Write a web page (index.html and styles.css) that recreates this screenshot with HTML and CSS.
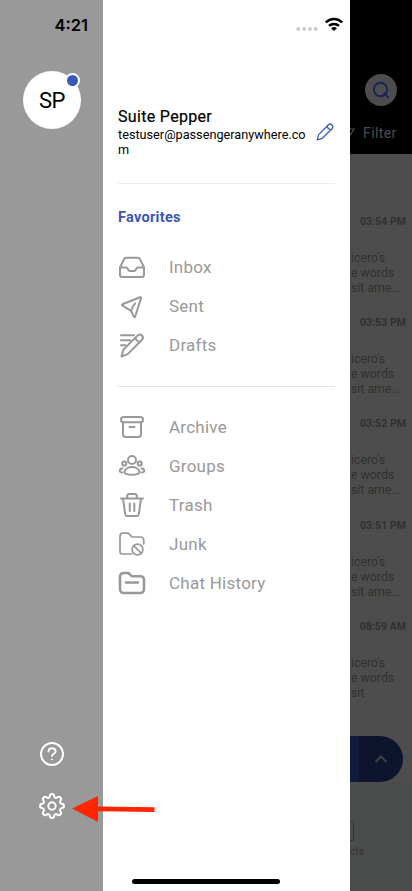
FILE: index.html
```html
<!DOCTYPE html>
<html lang="en">
<head>
<meta charset="utf-8">
<title>Menu</title>
<link rel="stylesheet" href="styles.css">
</head>
<body>
<div class="screen">
  <aside class="rail">
    <div class="clock">4:21</div>
    <div class="avatar">SP<span class="presence"></span></div>
    <div class="rail-tools">
      <svg width="26" height="26" viewBox="0 0 26 26" fill="none" stroke="#fff" stroke-width="1.9" stroke-linecap="round"><circle cx="13" cy="13" r="11"/><path d="M9.5 10.5C9.5 8.4 11 7.3 13 7.3s3.6 1.3 3.6 3.1c0 2.2-3.6 2.5-3.6 4.6"/><circle cx="13" cy="18.4" r=".5" fill="#fff" stroke-width="1"/></svg>
      <svg width="28" height="28" viewBox="0 0 28 28" fill="none" stroke="#fff" stroke-width="2" stroke-linejoin="round"><path d="M11.8 4.1C12.2 1.2 15.8 1.2 16.2 4.1C16.4 5.8 17.9 6.4 19.3 5.4C21.6 3.6 24.2 6.2 22.5 8.6C21.5 10.1 22.1 11.5 23.8 11.8C26.7 12.2 26.7 15.8 23.8 16.2C22.1 16.5 21.5 17.9 22.5 19.4C24.2 21.8 21.6 24.4 19.3 22.6C17.9 21.6 16.4 22.2 16.2 23.9C15.8 26.8 12.2 26.8 11.8 23.9C11.6 22.2 10.1 21.6 8.7 22.6C6.4 24.4 3.8 21.8 5.5 19.4C6.5 17.9 5.9 16.5 4.2 16.2C1.3 15.8 1.3 12.2 4.2 11.8C5.9 11.5 6.5 10.1 5.5 8.6C3.8 6.2 6.4 3.6 8.7 5.4C10.1 6.4 11.6 5.8 11.8 4.1Z"/><circle cx="14" cy="14" r="3.7"/></svg>
    </div>
  </aside>

  <main class="drawer">
    <div class="status">
      <svg width="22" height="6" viewBox="0 0 22 6" fill="#ccc"><circle cx="2.3" cy="3" r="2"/><circle cx="8.1" cy="3" r="2"/><circle cx="13.9" cy="3" r="2"/><circle cx="19.7" cy="3" r="2"/></svg>
      <svg class="wifi" width="20" height="15" viewBox="0 0 20 15" fill="none" stroke="#000" stroke-width="2.5"><path d="M1.8 5.5C6.3 .9 13.7 .9 18.2 5.5"/><path d="M5 8.9c2.8-2.7 7.2-2.7 10 0"/><path d="M7 11.2c1.7-1.6 4.3-1.6 6 0l-3 2.9z" fill="#000" stroke="none"/></svg>
    </div>
    <header class="profile">
      <div class="who">
        <div class="name">Suite Pepper</div>
        <div class="email">testuser@passengeranywhere.com</div>
      </div>
      <svg class="edit" width="18" height="18" viewBox="0 0 18 18" fill="none" stroke="#3b5bc0" stroke-width="1.3" stroke-linejoin="round"><path d="M1.2 16.8l1.4-5.2L12.2 2c2.6-2.500 6.200 1.100 3.800 3.700l-9.700 9.600z"/><path d="M11 3.200c.5 1.900 1.800 3.200 3.800 3.700"/></svg>
    </header>
    <h2 class="heading">Favorites</h2>
    <nav class="menu favorites">
      <a class="item"><svg class="icon" viewBox="0 0 28 28"><path d="M2 14.5L6 6.2Q6.7 4.7 8.3 4.7h11.4q1.6 0 2.3 1.5l4 8.3v7.2q0 2.4-2.4 2.4H4.4Q2 24.1 2 21.7z"/><path d="M2 14.5h6.3q1 0 1.4 1l.4 1.2q.5 1.3 1.900 1.3h4q1.400 0 1.900-1.3l.4-1.2q.4-1 1.400-1H26"/></svg>Inbox</a>
      <a class="item"><svg class="icon" viewBox="0 0 28 28"><path d="M4.500 12.300L22 5.300q1.300-.4 1 .9l-5.800 18.300q-.7 1.400-1.500.1l-2.600-5.800-8.600-5.200q-1-.7 0-1.300z"/><path d="M13.100 18.800q.6-4 4-7.300"/></svg>Sent</a>
      <a class="item"><svg class="icon" viewBox="0 0 28 28"><path d="M3.500 25.500l1.800-6.700L19.700 4.400c3.100-2.500 6.900 1.300 4.300 4.400L9.700 23.100z"/><path d="M17.300 6.800c.7 2.200 2.200 3.700 4.400 4.400M3 4.200h13M3 9.200h9.200M3 14.200h4.600"/></svg>Drafts</a>
    </nav>
    <nav class="menu folders">
      <a class="item"><svg class="icon" viewBox="0 0 28 28"><rect x="3" y="4" width="22" height="5.2" rx="2.5"/><path d="M5 9.200v12q0 2.800 2.800 2.800h12.400q2.800 0 2.800-2.800v-12M11.500 14h5"/></svg>Archive</a>
      <a class="item"><svg class="icon" viewBox="0 0 28 28"><circle cx="14" cy="8" r="4"/><circle cx="6.300" cy="11.500" r="2.100"/><circle cx="21.700" cy="11.500" r="2.100"/><path d="M6.500 20.200c.8-7 14.200-7 15 0 .4 3.500-15.400 3.500-15 0zM4.200 20.600c-2.500-.1-3-1.500-2.100-3.100.5-.8 1.100-1 2.400-1M23.800 20.600c2.500-.1 3-1.500 2.100-3.100-.5-.8-1.100-1-2.400-1"/></svg>Groups</a>
      <a class="item"><svg class="icon" viewBox="0 0 28 28"><path d="M3 7.500h22M5 7.500l2.200 15.700q.3 1.800 2.100 1.800h9.400q1.800 0 2.100-1.800L23 7.500M9.200 7.200V5q0-2 2-2h5.600q2 0 2 2v2.200M11.800 12.500v7.500M16.300 12.500v7.500"/></svg>Trash</a>
      <a class="item"><svg class="icon thin" viewBox="0 0 28 28"><path d="M13.500 24H4.500Q2 24 2 21.500V6.200q0-3 3-3h4.300q1.200 0 2 .9l1.800 2q.8.900 2 .9H22q3.800 0 3.800 3.800v3"/><circle cx="19.500" cy="19.500" r="5.400"/><path d="M15.700 15.700l7.600 7.600"/></svg>Junk</a>
      <a class="item"><svg class="icon bold" viewBox="0 0 28 28"><path d="M2 8q0-4 4-4h3.500q1.300 0 2 .9l1.200 1.400q.7.900 2 .9H22q4 0 4 4v8.800q0 4-4 4H6q-4 0-4-4zM8 13.500h12"/></svg>Chat History</a>
    </nav>
    <div class="home-bar"></div>
  </main>

  <section class="behind">
    <div class="topbar">
      <div class="search"><svg width="18" height="18" viewBox="0 0 18 18" fill="none" stroke="#182454" stroke-width="1.9" stroke-linecap="round"><circle cx="8.500" cy="8.500" r="6.700"/><path d="M12.300 12.300l4 4"/></svg></div>
      <div class="filter"><svg width="5" height="10" viewBox="0 0 5 10" fill="none" stroke="#4d4d4d" stroke-width="1.2"><path d="M0 1h4L0 7.500"/></svg><span>Filter</span></div>
    </div>
    <div class="messages">
      <article class="message"><time>03:54 PM</time><p>icero's<br>e words<br>sit ame...</p></article>
      <article class="message"><time>03:53 PM</time><p>icero's<br>e words<br>sit ame...</p></article>
      <article class="message"><time>03:52 PM</time><p>icero's<br>e words<br>sit ame...</p></article>
      <article class="message"><time>03:51 PM</time><p>icero's<br>e words<br>sit ame...</p></article>
      <article class="message"><time>08:59 AM</time><p>icero's<br>e words<br>sit</p></article>
    </div>
    <div class="compose"><svg width="14" height="10" viewBox="0 0 14 10" fill="none" stroke="#404040" stroke-width="2"><path d="M1.500 8L7 2.500 12.500 8"/></svg></div>
    <div class="tab"><span class="tab-icon"></span><span class="tab-label">cts</span></div>
  </section>

  <svg class="pointer" width="84" height="28" viewBox="0 0 84 28" fill="#ff2600"><path d="M0 13.500L26 1v10.400l56.500.9v4.800L26 16.200V27z"/></svg>
</div>
</body>
</html>
```
FILE: styles.css
```css
* { box-sizing: border-box; }

body {
  margin: 0;
  font-family: Roboto, "Noto Sans", sans-serif;
}

.screen {
  position: relative;
  display: flex;
  width: 412px;
  height: 891px;
  overflow: hidden;
  background: #fff;
}

/* Left rail */
.rail {
  display: flex;
  flex-direction: column;
  width: 103px;
  background: #999;
}

.clock {
  padding: 15px 15px 0 0;
  font: 600 16.5px/20px Inter, sans-serif;
  letter-spacing: 0;
  text-align: right;
}

.avatar {
  position: relative;
  width: 58px;
  height: 58px;
  margin: 36px 0 0 23px;
  border-radius: 50%;
  background: #fff;
  font-size: 22px;
  line-height: 60px;
  text-align: center;
  letter-spacing: -0.5px;
}

.presence {
  position: absolute;
  top: 2px;
  right: 1px;
  width: 15px;
  height: 15px;
  border: 2px solid #fff;
  border-radius: 50%;
  background: #3958b8;
}

.rail-tools {
  display: flex;
  flex-direction: column;
  align-items: center;
  gap: 25px;
  margin-top: auto;
  padding-bottom: 71px;
}

/* Drawer */
.drawer {
  display: flex;
  flex-direction: column;
  width: 247px;
  padding: 0 15px;
  background: #fff;
}

.status {
  display: flex;
  justify-content: flex-end;
  align-items: flex-end;
  gap: 6px;
  height: 32px;
  margin-right: -10px;
}

.wifi { margin-right: 1px; }

.profile {
  display: flex;
  height: 152px;
  padding-top: 75px;
  border-bottom: 1px solid #ededed;
}

.who { width: 190px; }

.name {
  font-size: 16px;
  line-height: 20px;
  letter-spacing: 0.32px;
  -webkit-text-stroke: 0.2px #000;
}

.email {
  font-size: 12.7px;
  line-height: 15px;
  overflow-wrap: anywhere;
}

.edit { margin: 16px 0 0 8px; }

.heading {
  margin: 24px 0 19px;
  color: #3b57b4;
  font-size: 14.5px;
  line-height: 20px;
  letter-spacing: 0.3px;
}

.menu {
  display: flex;
  flex-direction: column;
}

.favorites {
  height: 140px;
  border-bottom: 1px solid #e3e3e3;
}

.folders { padding-top: 20px; }

.item {
  display: flex;
  align-items: center;
  gap: 23px;
  height: 39px;
  color: #999;
  font-size: 17px;
  letter-spacing: 0.25px;
}

.icon {
  width: 28px;
  height: 28px;
  fill: none;
  stroke: #999;
  stroke-width: 2;
  stroke-linecap: round;
  stroke-linejoin: round;
}

.thin { stroke-width: 1.7; }
.bold { stroke-width: 2.6; }

.home-bar {
  align-self: center;
  width: 148px;
  height: 5px;
  margin: auto 0 7px -41px;
  border-radius: 3px;
  background: #000;
}

/* Dimmed screen behind the drawer */
.behind {
  display: flex;
  flex-direction: column;
  width: 62px;
  background: #4d4d4d;
}

.topbar {
  height: 154px;
  padding-top: 74px;
  background: #000;
}

.search {
  display: grid;
  place-items: center;
  width: 32px;
  height: 32px;
  margin-left: 15px;
  border-radius: 50%;
  background: #4d4d4d;
}

.filter {
  display: flex;
  align-items: center;
  gap: 8px;
  height: 20px;
  margin-top: 17px;
  color: #4d4d4d;
  font-size: 14px;
  letter-spacing: 0.4px;
}

.messages {
  height: 582px;
  padding-top: 61px;
}

.message {
  height: 101.2px;
  color: #303030;
}

.message time {
  display: block;
  padding-right: 6px;
  font-size: 10.6px;
  font-weight: 700;
  line-height: 14px;
  text-align: right;
}

.message p {
  margin: 22px 0 0 1px;
  font-size: 12.3px;
  line-height: 15px;
  white-space: nowrap;
}

.compose {
  display: flex;
  align-items: center;
  justify-content: flex-end;
  width: 53px;
  height: 46px;
  padding: 0 15px 0 0;
  border-radius: 0 23px 23px 0;
  background: linear-gradient(90deg, #101b3c 9px, #0e142e 9px);
}

.tab {
  flex: 1;
  padding-top: 39px;
  background: #4b4d4c;
}

.tab-icon {
  display: block;
  width: 4px;
  height: 20px;
  border: 1.5px solid #303030;
  border-left: 0;
  border-radius: 0 2px 2px 0;
}

.tab-label {
  display: block;
  margin-top: 4px;
  color: #303030;
  font-size: 10px;
  line-height: 14px;
  letter-spacing: 0.2px;
}

/* Callout arrow over the settings button */
.pointer {
  position: absolute;
  left: 72px;
  top: 795px;
}
```
